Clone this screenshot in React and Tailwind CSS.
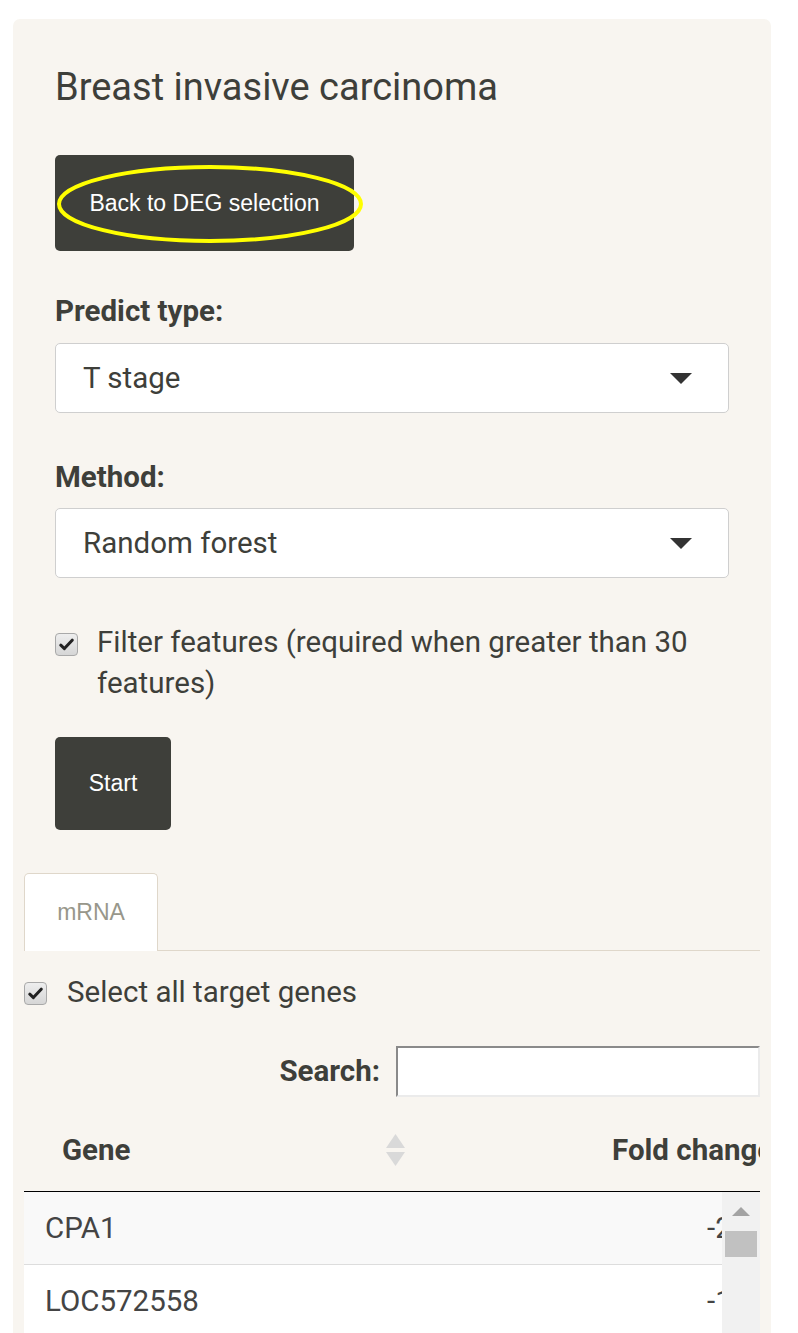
import React from "react";

function Check({ className }) {
  return (
    <div
      className={
        "flex h-[23px] w-[23px] shrink-0 items-center justify-center rounded-[4px] border border-[#a9a9a9] bg-gradient-to-b from-[#eeeeee] to-[#d6d6d6] " +
        (className || "")
      }
    >
      <svg width="15" height="13" viewBox="0 0 15 13">
        <path d="M1.8 7.2 L5.4 10.6 L13.2 2.2" fill="none" stroke="#222" strokeWidth="3" strokeLinecap="round" strokeLinejoin="round" />
      </svg>
    </div>
  );
}

function SelectBox({ value }) {
  return (
    <div className="flex h-[70px] w-full items-center justify-between rounded-[5px] border border-[#cfcfcf] bg-white pl-[27px] pr-[36px] text-[29.5px] text-[#3e3f3a]">
      <span>{value}</span>
      <svg width="22" height="11" viewBox="0 0 22 11">
        <polygon points="0,0 22,0 11,11" fill="#333333" />
      </svg>
    </div>
  );
}

export default function App() {
  const roboto = "font-['Roboto',sans-serif]";
  const arial = "font-['Liberation_Sans',Arial,sans-serif]";
  return (
    <div className={"min-h-[1333px] w-[798px] overflow-hidden bg-white pt-[19px] " + roboto}>
      <div className="ml-[13px] w-[758px] rounded-t-[7px] bg-[#f8f5f0] px-[11px] pb-[20px] pt-[43px]">
        <div className="px-[31px]">
          <div className="h-[50px] text-[38px] leading-[50px] text-[#3e3f3a]">Breast invasive carcinoma</div>

          <div className="relative mt-[43px] w-[299px]">
            <button className={"h-[96px] w-[299px] rounded-[5px] bg-[#3e3f3a] text-[23px] text-white " + arial}>
              Back to DEG selection
            </button>
            <svg className="pointer-events-none absolute left-[1px] top-[9px]" width="308" height="80" viewBox="0 0 308 80">
              <ellipse cx="154" cy="40" rx="151" ry="37" fill="none" stroke="#ffff00" strokeWidth="4" />
            </svg>
          </div>

          <div className="mt-[40px] h-[40px] text-[29.5px] font-bold leading-[40px] text-[#3e3f3a]">Predict type:</div>
          <div className="mt-[12px]">
            <SelectBox value="T stage" />
          </div>

          <div className="mt-[44px] h-[40px] text-[29.5px] font-bold leading-[40px] text-[#3e3f3a]">Method:</div>
          <div className="mt-[11px]">
            <SelectBox value="Random forest" />
          </div>

          <div className="mt-[44px] flex items-start gap-[19px]">
            <Check className="mt-[11px]" />
            <div className="text-[29.5px] leading-[41px] text-[#3e3f3a]">
              Filter features (required when greater than 30 features)
            </div>
          </div>

          <button className={"mt-[33px] h-[93px] w-[116px] rounded-[5px] bg-[#3e3f3a] text-[23px] text-white " + arial}>
            Start
          </button>
        </div>

        <div className="mt-[43px] flex border-b border-[#dfd7ca]">
          <div
            className={
              "-mb-px flex h-[78px] w-[134px] items-center justify-center rounded-t-[5px] border border-b-0 border-[#dfd7ca] bg-white text-[23px] text-[#98978b] " +
              arial
            }
          >
            mRNA
          </div>
        </div>

        <div className="mt-[21px] flex h-[40px] items-start gap-[20px]">
          <Check className="mt-[10px] h-[22px] w-[22px]" />
          <div className="text-[29.5px] leading-[40px] text-[#3e3f3a]">Select all target genes</div>
        </div>

        <div className="mt-[34px] flex items-center justify-end gap-[16px]">
          <div className="text-[29.5px] font-bold text-[#3e3f3a]">Search:</div>
          <div className="h-[51px] w-[364px] border-2 border-b-[#ebebeb] border-l-[#8a8a8a] border-r-[#ebebeb] border-t-[#8a8a8a] bg-white" />
        </div>

        <div className="mt-[12px] flex h-[83px] overflow-hidden border-b border-black">
          <div className="flex w-[391px] shrink-0 items-center justify-between pl-[38px] pr-[10px]">
            <span className="text-[29.5px] font-bold text-[#3e3f3a]">Gene</span>
            <svg width="19" height="32" viewBox="0 0 19 32">
              <polygon points="9.5,0 19,14 0,14" fill="#d9d9d9" />
              <polygon points="0,18 19,18 9.5,32" fill="#d9d9d9" />
            </svg>
          </div>
          <div className="flex shrink-0 items-center whitespace-nowrap pl-[197px] pr-[40px] text-[29.5px] font-bold text-[#3e3f3a]">
            Fold change
          </div>
        </div>

        <div className="flex">
          <div className="min-w-0 flex-1 overflow-hidden">
            <div className="flex h-[73px] items-center border-b border-[#dddddd] bg-[#f9f9f9]">
              <div className="w-[683px] shrink-0 pl-[21px] text-[29.5px] text-[#444444]">CPA1</div>
              <div className="shrink-0 whitespace-nowrap text-[29.5px] text-[#444444]">-2.41</div>
            </div>
            <div className="flex h-[73px] items-center bg-white">
              <div className="w-[683px] shrink-0 pl-[21px] text-[29.5px] text-[#444444]">LOC572558</div>
              <div className="shrink-0 whitespace-nowrap text-[29.5px] text-[#444444]">-1.87</div>
            </div>
          </div>
          <div className="flex w-[38px] shrink-0 flex-col items-center bg-[#f1f1f1]">
            <svg className="mt-[15px]" width="18" height="9" viewBox="0 0 18 9">
              <polygon points="9,0 18,9 0,9" fill="#a3a3a3" />
            </svg>
            <div className="mt-[15px] h-[26px] w-[32px] bg-[#c1c1c1]" />
          </div>
        </div>
      </div>
    </div>
  );
}
